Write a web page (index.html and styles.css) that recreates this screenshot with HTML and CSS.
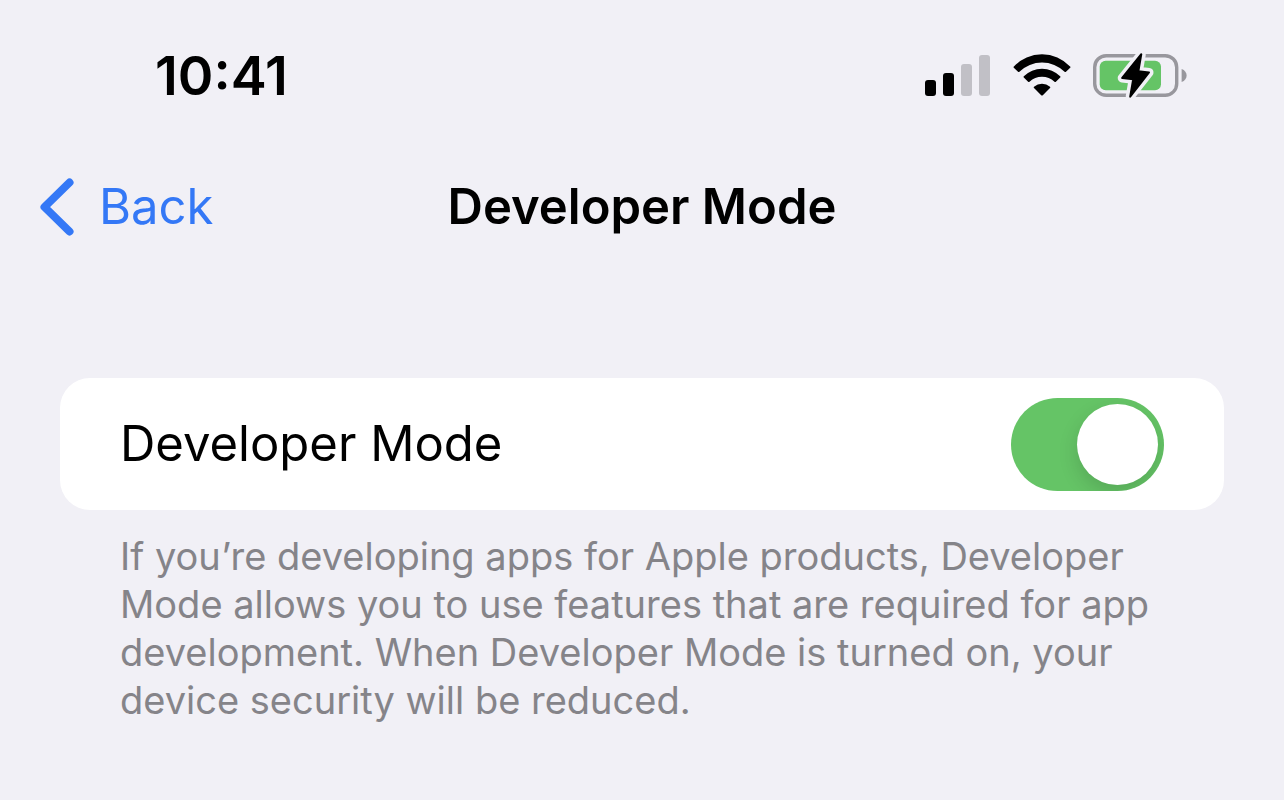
FILE: index.html
```html
<!DOCTYPE html>
<html lang="en">
<head>
  <meta charset="UTF-8">
  <meta name="viewport" content="width=device-width, initial-scale=1.0">
  <title>Developer Mode</title>
  <link rel="stylesheet" href="styles.css">
</head>
<body>
  <div class="status-bar">
    <time class="clock">10:41</time>
    <div class="status-icons">
      <svg class="signal" width="66" height="43" viewBox="0 0 66 43" aria-hidden="true">
        <rect x="0" y="25" width="11" height="16" rx="3"/>
        <rect x="18" y="18" width="11" height="23" rx="3"/>
        <rect class="signal-off" x="36" y="9" width="11" height="32" rx="3"/>
        <rect class="signal-off" x="54" y="0" width="11" height="41" rx="3"/>
      </svg>
      <svg class="wifi" width="58" height="44" viewBox="0 0 58 44" aria-hidden="true">
        <path d="M.9 12.5A38.3 38.3 0 0 1 57.1 12.5Q57.8 13.1 57.2 13.8L53 17.7Q52.3 18.3 51.6 17.7A32.4 32.4 0 0 0 6.4 17.7Q5.7 18.3 5 17.7L.8 13.8Q.2 13.1 .9 12.5Z"/>
        <path d="M10.8 22.3A25.5 25.5 0 0 1 47.2 22.3Q47.9 22.9 47.2 23.6L42.9 27.7Q42.2 28.3 41.5 27.7A18.6 18.6 0 0 0 16.5 27.7Q15.8 28.3 15.1 27.7L10.8 23.6Q10.1 22.9 10.8 22.3Z"/>
        <path d="M21 32.7A12.4 12.4 0 0 1 37 32.7Q37.7 33.4 37 34.1L29.8 41.2Q29 41.9 28.2 41.2L21 34.1Q20.3 33.4 21 32.7Z"/>
      </svg>
      <svg class="battery" width="94" height="47" viewBox="0 0 94 47" aria-hidden="true">
        <rect class="battery-shell" x="1.7" y="2.7" width="82" height="39.5" rx="11.5"/>
        <path class="battery-cap" d="M88.6 16C95.3 18.2 95.3 26.8 88.6 29Z"/>
        <rect class="battery-level" x="6.7" y="7.7" width="61.3" height="29.6" rx="6"/>
        <path class="battery-bolt-gap" d="M48.3 1.2L45.4 18.2L56 19.4L37.2 43.6L40.2 26.2L29.2 25Z"/>
        <path class="battery-bolt" d="M48.3 1.2L45.4 18.2L56 19.4L37.2 43.6L40.2 26.2L29.2 25Z"/>
      </svg>
    </div>
  </div>

  <header class="nav">
    <button class="back" type="button">
      <svg width="34" height="58" viewBox="0 0 34 58" aria-hidden="true">
        <path d="M29.5 4.5L4.5 29L29.5 53.5"/>
      </svg>
      Back
    </button>
    <h1 class="title">Developer Mode</h1>
  </header>

  <main class="settings">
    <div class="card">
      <label for="developer-mode">Developer Mode</label>
      <input class="switch" type="checkbox" role="switch" id="developer-mode" aria-describedby="developer-note" checked>
    </div>
    <p class="note" id="developer-note">If you’re developing apps for Apple products, Developer Mode allows you to use features that are required for app development. When Developer Mode is turned on, your device security will be reduced.</p>
  </main>
</body>
</html>
```

FILE: styles.css
```css
* {
  box-sizing: border-box;
}
body {
  margin: 0;
  background-color: #f1f0f6;
  color: #000;
  font-family: Inter, "Liberation Sans", sans-serif;
  font-size: 49px;
  line-height: 60px;
}
.status-bar {
  display: flex;
  align-items: center;
  justify-content: space-between;
  padding: 46px 97px 0 155px;
}
.clock {
  font-size: 54px;
  font-weight: 600;
}
.status-icons {
  display: flex;
  align-items: center;
  gap: 22px;
}
.signal-off {
  fill: #c1c0c6;
}
.battery {
  overflow: visible;
}
.battery-shell {
  fill: none;
  stroke: #98979d;
  stroke-width: 3.4;
}
.battery-cap {
  fill: #98979d;
}
.battery-level {
  fill: #65c466;
}
.battery-bolt,
.battery-bolt-gap {
  stroke-linejoin: round;
  stroke: #000;
  stroke-width: 2;
}
.battery-bolt-gap {
  stroke: #f1f0f6;
  stroke-width: 9;
}
.nav {
  display: grid;
  grid-template-columns: 1fr auto 1fr;
  align-items: center;
  padding: 71px 40px 0;
}
.back {
  display: flex;
  align-items: center;
  justify-self: start;
  gap: 25px;
  padding: 0;
  border: 0;
  background: none;
  color: #3478f6;
  font: inherit;
  cursor: pointer;
}
.back path {
  fill: none;
  stroke: currentColor;
  stroke-width: 8;
  stroke-linecap: round;
  stroke-linejoin: round;
}
.title {
  margin: 0;
  font-size: 49px;
  font-weight: 600;
}
.settings {
  padding: 141px 60px 0;
}
.card {
  display: flex;
  align-items: center;
  justify-content: space-between;
  min-height: 132px;
  padding: 0 60px;
  border-radius: 30px;
  background-color: #fff;
}
.switch {
  appearance: none;
  flex: none;
  width: 153px;
  height: 93px;
  margin: 0;
  padding: 6px;
  border-radius: 47px;
  background-color: #d9d9de;
  overflow: hidden;
  cursor: pointer;
}
.switch::before {
  content: "";
  display: block;
  width: 81px;
  height: 81px;
  border-radius: 50%;
  background-color: #fff;
  box-shadow: 0 8px 20px rgba(0, 0, 0, 0.14);
}
.switch:checked {
  background-color: #65c466;
}
.switch:checked::before {
  margin-left: auto;
}
.note {
  margin: 22px 0 0;
  padding: 0 60px;
  color: #858489;
  font-size: 38px;
  line-height: 48px;
}
```
